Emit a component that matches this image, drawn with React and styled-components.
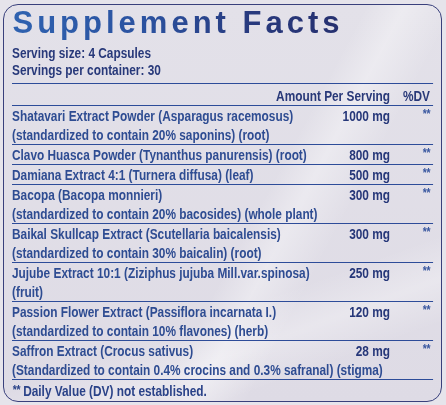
import React from "react";
import styled, { createGlobalStyle } from "styled-components";

const Global = createGlobalStyle`
  html, body { margin: 0; padding: 0; }
  body {
    background: #e6e4eb;
    width: 446px;
    height: 405px;
    overflow: hidden;
  }
`;

const SCALE = 0.79;

const Panel = styled.div`
  box-sizing: border-box;
  margin: 4px 4px 0 3px;
  height: 398px;
  border: 1.6px solid #39407c;
  border-radius: 15px;
  padding: 0 8px 0 7.5px;
  background:
    linear-gradient(118deg, rgba(255,255,255,0) 0%, rgba(255,255,255,0) 56%, rgba(255,255,255,0.35) 62%, rgba(255,255,255,0) 70%),
    linear-gradient(160deg, rgba(255,255,255,0) 70%, rgba(255,255,255,0.3) 78%, rgba(255,255,255,0) 86%),
    linear-gradient(180deg, #e3e1e9 0%, #dedbe5 100%);
  font-family: "Liberation Sans", Arial, sans-serif;
`;

const Title = styled.h1`
  margin: 0;
  padding-left: 1px;
  font-weight: 700;
  font-size: 31px;
  line-height: 36px;
  letter-spacing: 4px;
  white-space: nowrap;
  background: linear-gradient(90deg, #2f62b0 0%, #2b52a0 40%, #283a7e 72%, #26306f 100%);
  -webkit-background-clip: text;
  background-clip: text;
  color: transparent;
  width: max-content;
`;

/* condensed type: the label text is narrowed horizontally */
const Condensed = styled.div`
  width: ${421 / SCALE}px;
  transform: scaleX(${SCALE});
  transform-origin: left top;
`;

const Serving = styled.div`
  padding-top: 2.5px;
  padding-bottom: 5px;
  border-bottom: 1.6px solid #2d4c99;
`;

const ServingLine = styled.div`
  font-size: 15px;
  line-height: 17px;
  font-weight: 700;
  color: #28397a;
`;

const Row = styled.div`
  display: grid;
  grid-template-columns: 1fr auto ${43 / SCALE}px;
  border-bottom: 1.6px solid #2d4c99;
  font-size: 15px;
  line-height: 19px;
  font-weight: 700;
  white-space: nowrap;
`;

const HeadRow = styled(Row)`
  padding-top: 2px;
`;

const Head = styled.div`
  grid-column: ${(p) => p.$col};
  text-align: right;
  color: #283878;
  padding-right: ${(p) => (p.$col === 3 ? `${3 / SCALE}px` : "0")};
`;

const Name = styled.div`
  grid-column: ${(p) => (p.$wide ? "1 / 3" : "1")};
  color: #2e4c92;
`;

const Amount = styled.div`
  grid-column: 2;
  text-align: right;
  color: #263779;
`;

const Dv = styled.div`
  grid-column: 3;
  text-align: right;
  padding-right: ${3 / SCALE}px;
  color: #3a58a0;
  font-size: 13px;
  line-height: 15px;
  letter-spacing: -0.5px;
`;

const Footer = styled.div`
  font-size: 15px;
  line-height: 19px;
  font-weight: 700;
  color: #2a4288;
  padding-left: 1px;
`;

const Stars = styled.span`
  font-size: 13px;
  vertical-align: 2px;
  letter-spacing: -0.5px;
  margin-right: 4px;
`;

const items = [
  {
    name: "Shatavari Extract Powder (Asparagus racemosus)",
    sub: "(standardized to contain 20% saponins) (root)",
    amount: "1000 mg",
  },
  { name: "Clavo Huasca Powder (Tynanthus panurensis) (root)", amount: "800 mg" },
  { name: "Damiana Extract 4:1 (Turnera diffusa) (leaf)", amount: "500 mg" },
  {
    name: "Bacopa (Bacopa monnieri)",
    sub: "(standardized to contain 20% bacosides) (whole plant)",
    amount: "300 mg",
  },
  {
    name: "Baikal Skullcap Extract (Scutellaria baicalensis)",
    sub: "(standardized to contain 30% baicalin) (root)",
    amount: "300 mg",
  },
  {
    name: "Jujube Extract 10:1 (Ziziphus jujuba Mill.var.spinosa)",
    sub: "(fruit)",
    amount: "250 mg",
  },
  {
    name: "Passion Flower Extract (Passiflora incarnata I.)",
    sub: "(standardized to contain 10% flavones) (herb)",
    amount: "120 mg",
  },
  {
    name: "Saffron Extract (Crocus sativus)",
    sub: "(Standardized to contain 0.4% crocins and 0.3% safranal) (stigma)",
    amount: "28 mg",
  },
];

export default function App() {
  return (
    <>
      <Global />
      <Panel>
        <Title>Supplement Facts</Title>
        <Condensed>
          <Serving>
            <ServingLine>Serving size: 4 Capsules</ServingLine>
            <ServingLine>Servings per container: 30</ServingLine>
          </Serving>
          <HeadRow>
            <Head $col={2}>Amount Per Serving</Head>
            <Head $col={3}>%DV</Head>
          </HeadRow>
          {items.map((it) => (
            <Row key={it.name}>
              <Name>{it.name}</Name>
              <Amount>{it.amount}</Amount>
              <Dv>**</Dv>
              {it.sub && <Name $wide>{it.sub}</Name>}
            </Row>
          ))}
          <Footer>
            <Stars>**</Stars>Daily Value (DV) not established.
          </Footer>
        </Condensed>
      </Panel>
    </>
  );
}
